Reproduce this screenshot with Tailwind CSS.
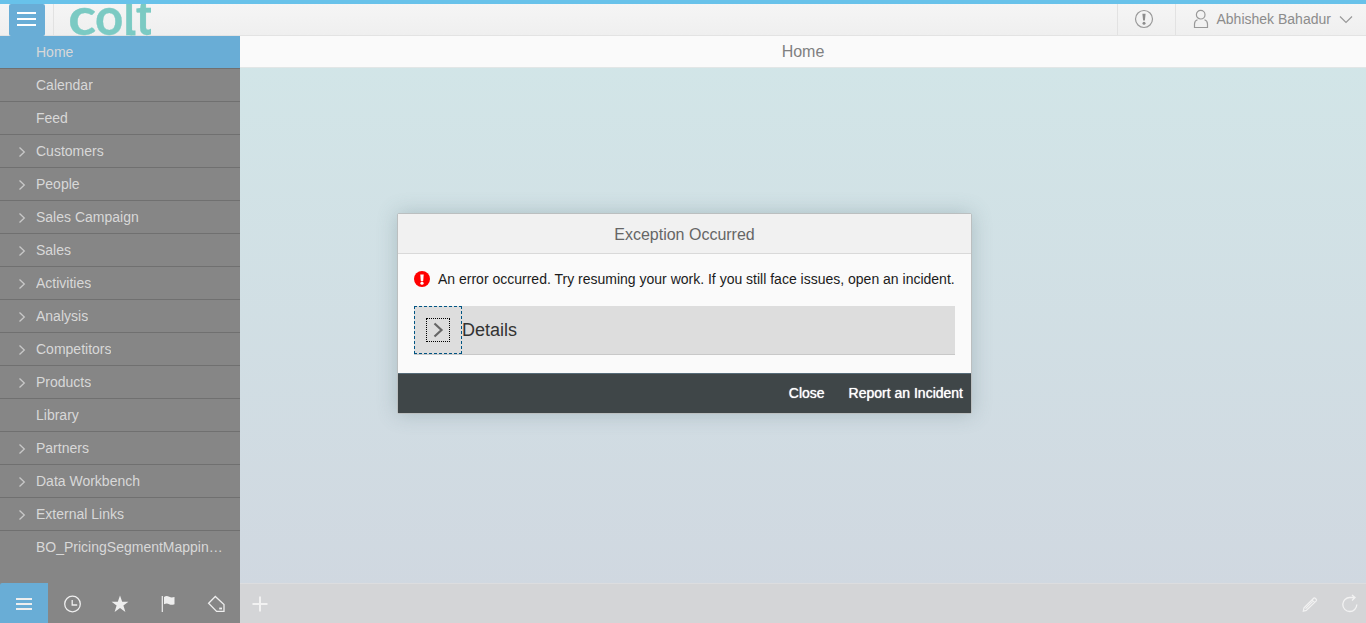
<!DOCTYPE html>
<html lang="en">
<head>
<meta charset="utf-8">
<title>Home</title>
<script src="https://cdn.jsdelivr.net/npm/@tailwindcss/browser@4"></script>
</head>
<body class="relative flex h-[623px] w-[1366px] flex-col overflow-hidden font-['Liberation_Sans',Arial,sans-serif] text-sm">
  <header class="flex h-9 shrink-0 border-t-4 border-b border-t-[#68c2ea] border-b-[#e3e3e3] bg-linear-to-b from-[#f5f5f5] to-[#efefef]">
    <button class="ml-[9px] flex h-8 w-9 shrink-0 rounded-xs bg-[#69add6]" aria-label="Menu">
      <svg class="h-8 w-9" viewBox="0 0 36 32" stroke="#fff" stroke-width="2"><path d="M8 9h19M8 15h19M8 21h19"/></svg>
    </button>
    <div class="ml-2 h-[31px] w-px bg-[#e2e2e2]"></div>
    <svg class="ml-4 h-8 w-[81px] shrink-0 overflow-hidden" viewBox="0 0 81 32">
      <g fill="#7bcac3" stroke="#7bcac3" stroke-width=".3" font-family="Lato, sans-serif" font-weight="700" font-size="52">
        <text transform="translate(-1.700 31.300) scale(1.110 1)">c</text>
        <text transform="translate(25 31.300) scale(.95 1)">o</text>
        <text transform="translate(53.500 31.300) scale(.87 1)">l</text>
        <text transform="translate(65.800 31.300) scale(.9 1)">t</text>
      </g>
      <path d="M58 23h4v2.500q0 1 1 1h2.500V31.500h-4q-3.500 0-3.500-3.500z" fill="#7bcac3"/>
    </svg>
    <div class="ml-auto flex">
      <div class="flex w-[58px] items-start justify-center border-l border-[#e2e2e2] pt-[5px] pr-[5px]">
        <svg class="h-5 w-5" viewBox="0 0 20 20" fill="none" stroke="#999"><circle cx="10" cy="10" r="8.5" stroke-width="1.2"/><path d="M8.400 4.800h3.200l-.7 6.800H9.100z" fill="#8c8c8c" stroke="none"/><circle cx="10" cy="14.200" r="1.5" fill="#8c8c8c" stroke="none"/></svg>
      </div>
      <div class="flex w-[191px] border-l border-[#e2e2e2] pl-[17px]">
        <svg class="mt-[5px] h-5 w-4" viewBox="0 0 16 20" fill="none" stroke="#999" stroke-width="1.2"><circle cx="7.700" cy="5.700" r="4.300"/><path d="M4.500 10.800C2.500 11.500 1.500 13 1.500 15v3.500h13V15c0-2-1-3.500-3-4.200"/></svg>
        <span class="ml-[7.500px] leading-[31px] whitespace-nowrap text-[#8c8c8c]">Abhishek Bahadur</span>
        <svg class="mt-[11px] ml-2 h-2.5 w-3.5" viewBox="0 0 14 10" fill="none" stroke="#999" stroke-width="1.2"><path d="M1 1.500l6 6 6-6"/></svg>
      </div>
    </div>
  </header>

  <div class="flex min-h-0 flex-1">
    <aside class="flex w-60 shrink-0 flex-col bg-[#868686] text-[#d8d8d8]">
      <nav id="nav" class="flex-1"></nav>
      <div class="flex h-10 text-[#eee]">
        <div class="w-12 rounded-tl-xs bg-[#69add6]"><svg class="h-10 w-12" viewBox="0 0 48 40" fill="none" stroke="currentColor" stroke-width="2"><path d="M16 16h16M16 21h16M16 26h16"/></svg></div>
        <svg class="h-10 w-12" viewBox="0 0 48 40" fill="none" stroke="currentColor" stroke-width="1.300"><circle cx="24.500" cy="21" r="7.800"/><path d="M24.200 17v5h5"/></svg>
        <svg class="h-10 w-12" viewBox="0 0 48 40" fill="currentColor"><path d="M24 12.500l2.200 6.200h6.200l-5 3.700 2 6.600-5.400-4-5.400 4 2-6.600-5-3.700h6.200z"/></svg>
        <svg class="h-10 w-12" viewBox="0 0 48 40" fill="currentColor"><path d="M17.700 13h1.200v16h-1.200zM20 14c2-1.300 3.500-1 5.200-.2s3 .8 5.300.2v7.200c-2.300.8-3.600.8-5.300 0s-3.200-.8-5.200 0z"/></svg>
        <svg class="h-10 w-12" viewBox="0 0 48 40" fill="none" stroke="currentColor" stroke-width="1.300"><path d="M23.300 13.500L16.600 20.300l8 8.100h7.400v-6.900z"/><path d="M27.200 25.500h2.800" stroke-width="1.800"/></svg>
      </div>
    </aside>

    <main class="flex flex-1 flex-col bg-linear-to-b from-[#d2e6e8] to-[#d0d7e0]">
      <h1 class="h-8 border-b border-[#e2e6e6] bg-[#fafafa] text-center text-base leading-[31px] text-[#808080]">Home</h1>
      <div class="flex-1"></div>
      <footer class="flex h-10 border-t border-[#dcdddf] bg-[#d4d5d7] text-[#f2f2f2]">
        <svg class="h-10 w-10" viewBox="0 0 40 40" stroke="currentColor" stroke-width="2"><path d="M12.500 20h15M20 12.500v15"/></svg>
        <svg class="ml-auto h-10 w-10" viewBox="-4 0 40 40" fill="none" stroke="currentColor" stroke-width="1.200"><path d="M16.500 26.300l-3.200.8.700-3.200 9.900-9.900c.8-.7 3.300 1.800 2.600 2.600zM21.800 15.800l2.800 2.800M15.500 24.700l7-7"/></svg>
        <svg class="h-10 w-10" viewBox="0 0 40 40" fill="none" stroke="currentColor" stroke-width="1.300"><path d="M30.800 20.500a7 7 0 1 1-6.800-7h5M26 11l3 2.500-3 3"/></svg>
      </footer>
    </main>
  </div>

  <div role="dialog" class="absolute top-[213px] left-[397px] flex h-[201px] w-[575px] flex-col rounded-xs border border-[#bbbfc0] bg-[#fafafa] shadow-[0_0_20px_rgba(80,110,115,0.3)]">
    <h2 class="h-10 shrink-0 border-b border-[#d9d9d9] bg-[#f1f1f1] text-center text-base leading-[41px] text-[#666]">Exception Occurred</h2>
    <div class="flex-1 px-4 pt-4">
      <div class="flex h-[18px] items-center gap-2">
        <svg class="h-4 w-4 shrink-0" viewBox="0 0 16 16"><circle cx="8" cy="8" r="8" fill="red"/><path d="M6.300 3.500h3.400L9.200 10H6.800z" fill="#fff"/><circle cx="8" cy="12.200" r="1.600" fill="#fff"/></svg>
        <span class="whitespace-nowrap text-[#1b1b1b]">An error occurred. Try resuming your work. If you still face issues, open an incident.</span>
      </div>
      <div class="mt-[18px] flex h-[49px] w-[541px] border-b border-[#c8c8c8] bg-[#ddd]">
        <div class="flex h-12 w-12 items-center justify-center border border-dashed border-[#005483]">
          <div class="h-6 w-6 border border-dotted border-black"><svg class="h-[22px] w-[22px]" viewBox="0 0 22 22" fill="none" stroke="#666" stroke-width="2.200"><path d="M7.500 4.500l7 6.500-7 6.500"/></svg></div>
        </div>
        <span class="text-lg leading-[49px] text-[#333]">Details</span>
      </div>
    </div>
    <div class="flex h-10 shrink-0 justify-end gap-6 border-t border-[#566b78] bg-[#3f4648] pr-2 leading-[38px] text-white [text-shadow:0_0_1px_#fff]">
      <span>Close</span><span>Report an Incident</span>
    </div>
  </div>

  <script>
    const items = [['Home', 0], ['Calendar', 0], ['Feed', 0], ['Customers', 1], ['People', 1], ['Sales Campaign', 1], ['Sales', 1], ['Activities', 1], ['Analysis', 1], ['Competitors', 1], ['Products', 1], ['Library', 0], ['Partners', 1], ['Data Workbench', 1], ['External Links', 1], ['BO_PricingSegmentMappingTable', 0]];
    const chevron = '<svg class="mt-px ml-[18px] h-3 w-2" viewBox="0 0 8 12" fill="none" stroke="#c8c8c8" stroke-width="1.300"><path d="M1.500 1.500L6.300 6 1.500 10.500"/></svg>';
    document.getElementById('nav').innerHTML = items.map(([label, group], i) =>
      `<div class="flex h-[33px] items-center border-b pr-[17px] ${i === 0 ? 'border-[#707070] bg-[#69add6]' : i === items.length - 1 ? 'border-transparent' : 'border-[#707070]'}">${group ? chevron : ''}<span class="truncate ${group ? 'ml-2.5' : 'ml-9'}">${label}</span></div>`).join('');
  </script>
</body>
</html>
